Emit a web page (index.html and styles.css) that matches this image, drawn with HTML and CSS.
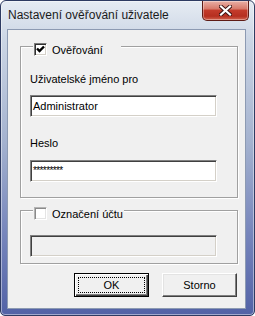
FILE: index.html
```html
<!DOCTYPE html>
<html lang="cs">
<head>
    <meta charset="UTF-8">
    <title>Nastavení ověřování uživatele</title>
    <link rel="stylesheet" href="styles.css">
</head>
<body>

    <div class="window">
        <div class="titlebar">
            <span class="title">Nastavení ověřování uživatele</span>
            <span class="close">
                <svg width="13" height="11" viewBox="0 0 13 11">
                    <path d="M2 1.5 L11 9.5 M11 1.5 L2 9.5" stroke="#3a1010" stroke-width="4" stroke-linecap="square"/>
                    <path d="M2 1.5 L11 9.5 M11 1.5 L2 9.5" stroke="#fff" stroke-width="2.2" stroke-linecap="square"/>
                </svg>
            </span>
        </div>

        <div class="client">
            <div class="group group-auth">
                <div class="group-title">
                    <span class="check">
                        <svg width="11" height="11" viewBox="0 0 11 11">
                            <path d="M2 4.5 L4.5 7 L9 2.5" fill="none" stroke="#000" stroke-width="2.4"/>
                        </svg>
                    </span>
                    <span>Ověřování</span>
                </div>
                <div class="field-label">Uživatelské jméno pro</div>
                <div class="input">Administrator</div>
                <div class="field-label label-pass">Heslo</div>
                <div class="input input-pass">*********</div>
            </div>

            <div class="group group-account">
                <div class="group-title title-account">
                    <span class="check check-empty"></span>
                    <span>Označení účtu</span>
                </div>
                <div class="input input-disabled"></div>
            </div>

            <div class="buttons">
                <button class="btn btn-default"><span class="focus">OK</span></button>
                <button class="btn">Storno</button>
            </div>
        </div>
    </div>

</body>
</html>
```

FILE: styles.css
```css
body {
    margin: 0;
    font-family: "Liberation Sans", Arial, sans-serif;
    font-size: 11px;
    color: #000;
    background: #fff;
}

.window {
    width: 255px;
    height: 316px;
    box-sizing: border-box;
    display: flex;
    flex-direction: column;
    border: 1px solid #2e3b62;
    border-radius: 6px 6px 5px 5px;
    background: linear-gradient(#e6ecf3, #ccd6e5 12%, #a4b2cf 45%, #7584bb 75%, #5262a6);
    box-shadow: inset 0 0 0 1px rgba(255, 255, 255, 0.45);
}

.titlebar {
    height: 28px;
    display: flex;
    justify-content: space-between;
    align-items: flex-start;
}

.title {
    padding: 7px 0 0 7px;
    font-size: 12px;
    line-height: 14px;
    color: #1b1b1b;
}

.close {
    width: 47px;
    height: 20px;
    box-sizing: border-box;
    margin-right: 5px;
    display: flex;
    align-items: center;
    justify-content: center;
    border: 1px solid #5e1c16;
    border-top: none;
    border-radius: 0 0 5px 5px;
    background: linear-gradient(#e9b0a6, #d87b6c 40%, #c33b2b 50%, #b52f20 80%, #d4644f);
    box-shadow: inset 0 0 0 1px rgba(255, 255, 255, 0.35);
}

.client {
    height: 280px;
    box-sizing: border-box;
    margin: 0 8px 0 6px;
    background: #f0f0f0;
    border: 1px solid #8c9ab2;
}

.group {
    box-sizing: border-box;
    margin: 16px 0 0 12px;
    width: 218px;
    padding: 0 0 0 9px;
    border: 1px solid #a0a0a0;
    box-shadow: inset 1px 1px 0 #fff, 1px 1px 0 #fff;
}

.group-auth {
    height: 152px;
}

.group-account {
    height: 54px;
    margin-top: 12px;
}

.group-title {
    display: flex;
    align-items: center;
    gap: 5px;
    width: 87px;
    height: 13px;
    margin: -4px 0 0 3px;
    padding-left: 1px;
    background: #f0f0f0;
}

.title-account {
    width: 90px;
}

.check {
    width: 13px;
    height: 13px;
    box-sizing: border-box;
    display: flex;
    align-items: center;
    justify-content: center;
    background: #fff;
    border: 1px solid;
    border-color: #7a7a7a #fff #fff #7a7a7a;
    box-shadow: inset 1px 1px 0 #303030, inset -1px -1px 0 #d4d0c8;
}

.check-empty {
    border-color: #b4b4b4 #fff #fff #b4b4b4;
    box-shadow: inset 1px 1px 0 #8a8a8a, inset -1px -1px 0 #e4e4e4;
}

.field-label {
    height: 13px;
    line-height: 13px;
    margin-top: 17px;
}

.label-pass {
    margin-top: 20px;
}

.input {
    width: 187px;
    height: 22px;
    box-sizing: border-box;
    margin-top: 9px;
    padding-left: 2px;
    line-height: 20px;
    background: #fff;
    border: 1px solid;
    border-color: #808080 #fff #fff #808080;
    box-shadow: inset 1px 1px 0 #404040, inset -1px -1px 0 #d4d0c8;
}

.input-pass {
    margin-top: 10px;
    font-size: 10px;
    letter-spacing: -0.6px;
}

.input-disabled {
    margin-top: 15px;
    background: #f0f0f0;
}

.buttons {
    display: flex;
    justify-content: flex-end;
    gap: 13px;
    margin: 9px 8px 0 0;
}

.btn {
    width: 75px;
    height: 24px;
    box-sizing: border-box;
    padding: 0;
    font-family: "Liberation Sans", Arial, sans-serif;
    font-size: 11px;
    color: #000;
    background: #f0f0f0;
    border: 1px solid;
    border-color: #fff #404040 #404040 #fff;
    box-shadow: inset -1px -1px 0 #808080, inset 1px 1px 0 #e3e3e3;
}

.btn-default {
    border-color: #000;
    box-shadow: inset 1px 1px 0 #fff, inset -1px -1px 0 #404040, inset -2px -2px 0 #808080;
    padding: 3px;
}

.focus {
    display: block;
    height: 100%;
    box-sizing: border-box;
    line-height: 14px;
    border: 1px dotted #000;
}
```
